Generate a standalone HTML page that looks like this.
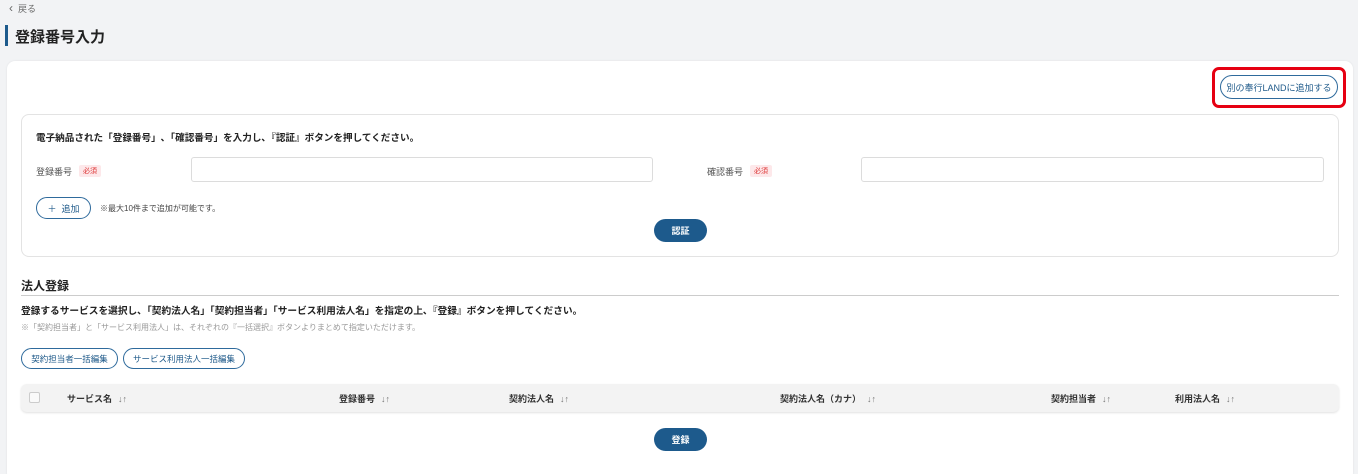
<!DOCTYPE html><html><head><meta charset="utf-8"><style>
*{box-sizing:border-box;margin:0;padding:0}
html,body{width:1358px;height:474px;overflow:hidden}
body{background:#f2f3f5;font-family:"Liberation Sans","Noto Sans CJK JP",sans-serif;color:#222;position:relative}
.a{position:absolute}
.btno{position:absolute;border:1px solid #2e6a9c;border-radius:12px;color:#1f5a8a;font-size:9px;display:flex;align-items:center;justify-content:center;background:#fff}
.btnf{position:absolute;background:#1d5a8c;color:#fff;border-radius:12px;font-size:9px;font-weight:bold;display:flex;align-items:center;justify-content:center}
.inp{position:absolute;border:1px solid #dcdcdc;border-radius:3px;background:#fff}
.req{position:absolute;background:#fde8ea;color:#d33;font-size:7px;padding:1px 4px;border-radius:2px}
.th{position:absolute;top:392px;font-size:9px;font-weight:bold;color:#333}
.th span{color:#777;font-weight:normal;margin-left:6px}
</style></head><body>
<div class="a" style="left:9px;top:1px;font-size:9px;color:#666"><span style="font-size:12px">‹</span>&nbsp;&nbsp;戻る</div>
<div class="a" style="left:5px;top:25px;width:3px;height:21px;background:#1d5a8c"></div>
<div class="a" style="left:15px;top:26px;font-size:15px;font-weight:bold">登録番号入力</div>
<div class="a" style="left:7px;top:61px;width:1346px;height:420px;background:#fff;border-radius:8px;box-shadow:0 0 2px rgba(0,0,0,.08)"></div>
<div class="a" style="left:1212px;top:67px;width:134px;height:41px;border:3px solid #e60012;border-radius:7px"></div>
<div class="btno" style="left:1220px;top:75px;width:118px;height:24px">別の奉行LANDに追加する</div>
<div class="a" style="left:21px;top:114px;width:1318px;height:143px;border:1px solid #e3e3e3;border-radius:8px;background:#fff"></div>
<div class="a" style="left:36px;top:130px;font-size:9.6px;font-weight:bold">電子納品された「登録番号」､「確認番号」を入力し､『認証』ボタンを押してください。</div>
<div class="a" style="left:36px;top:165px;font-size:9px;color:#555">登録番号</div>
<div class="req" style="left:79px;top:165px">必須</div>
<div class="inp" style="left:191px;top:157px;width:462px;height:25px"></div>
<div class="a" style="left:707px;top:165px;font-size:9px;color:#555">確認番号</div>
<div class="req" style="left:750px;top:165px">必須</div>
<div class="inp" style="left:861px;top:157px;width:463px;height:25px"></div>
<div class="btno" style="left:36px;top:197px;width:55px;height:22px;font-size:9px">＋&nbsp;&nbsp;追加</div>
<div class="a" style="left:100px;top:203px;font-size:8px;color:#444">※最大10件まで追加が可能です。</div>
<div class="btnf" style="left:654px;top:219px;width:53px;height:23px">認証</div>
<div class="a" style="left:21px;top:277px;font-size:12px;font-weight:bold">法人登録</div>
<div class="a" style="left:21px;top:295px;width:1318px;height:1px;background:#ccc"></div>
<div class="a" style="left:21px;top:303px;font-size:9.7px;font-weight:bold">登録するサービスを選択し､「契約法人名」「契約担当者」「サービス利用法人名」を指定の上､『登録』ボタンを押してください。</div>
<div class="a" style="left:21px;top:322px;font-size:8px;color:#999">※「契約担当者」と「サービス利用法人」は、それぞれの『一括選択』ボタンよりまとめて指定いただけます。</div>
<div class="btno" style="left:21px;top:348px;width:97px;height:21px;font-size:8.5px">契約担当者一括編集</div>
<div class="btno" style="left:123px;top:348px;width:122px;height:21px;font-size:8.5px">サービス利用法人一括編集</div>
<div class="a" style="left:21px;top:384px;width:1318px;height:28px;background:#f3f3f3;border-radius:6px;box-shadow:0 1px 2px rgba(0,0,0,.12)"></div>
<div class="a" style="left:29px;top:392px;width:11px;height:11px;border:1px solid #ccc;background:#fafafa;border-radius:2px"></div>
<div class="th" style="left:67px">サービス名<span>↓↑</span></div>
<div class="th" style="left:339px">登録番号<span>↓↑</span></div>
<div class="th" style="left:509px">契約法人名<span>↓↑</span></div>
<div class="th" style="left:780px">契約法人名（カナ）<span>↓↑</span></div>
<div class="th" style="left:1051px">契約担当者<span>↓↑</span></div>
<div class="th" style="left:1175px">利用法人名<span>↓↑</span></div>
<div class="btnf" style="left:654px;top:428px;width:53px;height:23px">登録</div>
</body></html>
